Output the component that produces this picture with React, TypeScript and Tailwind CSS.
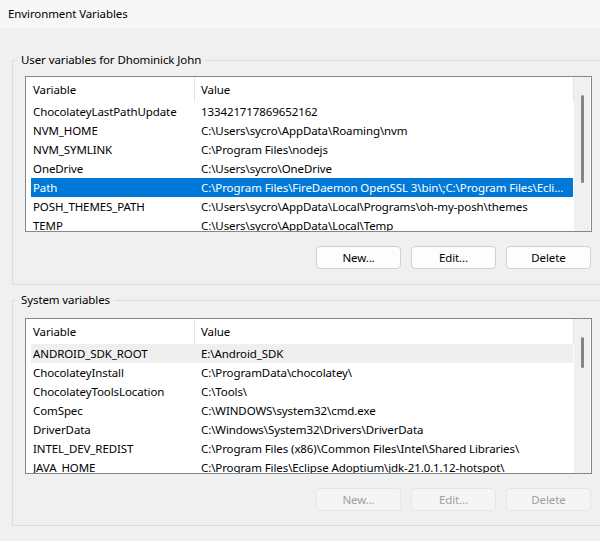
import React from 'react';

type Row = { name: string; value: string };

const userVars: Row[] = [
    { name: 'ChocolateyLastPathUpdate', value: '133421717869652162' },
    { name: 'NVM_HOME', value: 'C:\\Users\\sycro\\AppData\\Roaming\\nvm' },
    { name: 'NVM_SYMLINK', value: 'C:\\Program Files\\nodejs' },
    { name: 'OneDrive', value: 'C:\\Users\\sycro\\OneDrive' },
    { name: 'Path', value: 'C:\\Program Files\\FireDaemon OpenSSL 3\\bin\\;C:\\Program Files\\Ecli...' },
    { name: 'POSH_THEMES_PATH', value: 'C:\\Users\\sycro\\AppData\\Local\\Programs\\oh-my-posh\\themes' },
    { name: 'TEMP', value: 'C:\\Users\\sycro\\AppData\\Local\\Temp' },
];

const systemVars: Row[] = [
    { name: 'ANDROID_SDK_ROOT', value: 'E:\\Android_SDK' },
    { name: 'ChocolateyInstall', value: 'C:\\ProgramData\\chocolatey\\' },
    { name: 'ChocolateyToolsLocation', value: 'C:\\Tools\\' },
    { name: 'ComSpec', value: 'C:\\WINDOWS\\system32\\cmd.exe' },
    { name: 'DriverData', value: 'C:\\Windows\\System32\\Drivers\\DriverData' },
    { name: 'INTEL_DEV_REDIST', value: 'C:\\Program Files (x86)\\Common Files\\Intel\\Shared Libraries\\' },
    { name: 'JAVA_HOME', value: 'C:\\Program Files\\Eclipse Adoptium\\jdk-21.0.1.12-hotspot\\' },
];

const VarList: React.FC<{
    rows: Row[];
    selected?: number;
    hovered?: number;
    thumbTop: string;
    thumbHeight: string;
}> = ({ rows, selected, hovered, thumbTop, thumbHeight }) => (
    <div className="ml-[12px] w-[567px] h-[156px] border border-[#828790] bg-white flex overflow-hidden">
        <div className="flex-1 flex flex-col overflow-hidden">
            {/* header */}
            <div className="flex h-[25px] shrink-0 items-center">
                <div className="w-[168px] pl-[7px] h-full flex items-center">Variable</div>
                <div className="w-px h-full bg-[#e5e5e5]" />
                <div className="flex-1 pl-[6px] h-full flex items-center">Value</div>
                <div className="w-px h-full bg-[#e5e5e5]" />
            </div>
            {/* rows */}
            <div className="flex flex-col pl-[5px] pr-px">
                {rows.map((r, i) => (
                    <div
                        key={r.name}
                        className={
                            'flex h-[19px] shrink-0 items-center whitespace-nowrap ' +
                            (i === selected
                                ? 'bg-[#0078d7] text-white'
                                : i === hovered
                                  ? 'bg-[#efefef]'
                                  : '')
                        }
                    >
                        <div className="w-[168px] pl-[2px] overflow-hidden">{r.name}</div>
                        <div className="flex-1 pl-[2px] overflow-hidden">{r.value}</div>
                    </div>
                ))}
            </div>
        </div>
        {/* scrollbar */}
        <div className="w-[16px] bg-[#f0f0f0] relative shrink-0">
            <div
                className="absolute left-[7px] w-[3px] rounded-full bg-[#858585]"
                style={{ top: thumbTop, height: thumbHeight }}
            />
        </div>
        <div className="w-px shrink-0" />
    </div>
);

const Btn: React.FC<{ label: string; disabled?: boolean }> = ({ label, disabled }) => (
    <button
        className={
            'w-[85px] h-[23px] rounded-[4px] border flex items-center justify-center ' +
            (disabled
                ? 'bg-[#f5f5f5] border-[#e6e6e6] text-[#a0a0a0]'
                : 'bg-[#fdfdfd] border-[#d0d0d0] text-black')
        }
    >
        {label}
    </button>
);

const GroupBox: React.FC<{ title: string; children: React.ReactNode; height: string }> = ({
    title,
    children,
    height,
}) => (
    <div className={'relative ml-[12px] w-[620px] border border-[#dcdcdc] ' + height}>
        <span className="absolute left-[4px] -top-[9px] px-[4px] bg-[#f0f0f0] leading-[16px]">
            {title}
        </span>
        <div className="pt-[15px]">{children}</div>
    </div>
);

export default function App() {
    return (
        <div
            className="w-[600px] h-[541px] bg-[#f0f0f0] overflow-hidden text-[11.5px] tracking-[-0.1px] text-black"
            style={{ fontFamily: '"Noto Sans", "Open Sans", sans-serif' }}
        >
            <div className="h-[28px] bg-[#f7f7f7] flex items-center px-[8px]">Environment Variables</div>

            <div className="pt-[32px]">
                <GroupBox title="User variables for Dhominick John" height="h-[225px]">
                    <VarList rows={userVars} selected={4} thumbTop="18px" thumbHeight="88px" />
                    <div className="flex gap-[10px] ml-[303px] mt-[14px]">
                        <Btn label="New..." />
                        <Btn label="Edit..." />
                        <Btn label="Delete" />
                    </div>
                </GroupBox>

                <div className="h-[15px]" />

                <GroupBox title="System variables" height="h-[226px]">
                    <div className="pt-[2px]">
                        <VarList rows={systemVars} hovered={0} thumbTop="18px" thumbHeight="31px" />
                    </div>
                    <div className="flex gap-[10px] ml-[303px] mt-[14px]">
                        <Btn label="New..." disabled />
                        <Btn label="Edit..." disabled />
                        <Btn label="Delete" disabled />
                    </div>
                </GroupBox>
            </div>
        </div>
    );
}
